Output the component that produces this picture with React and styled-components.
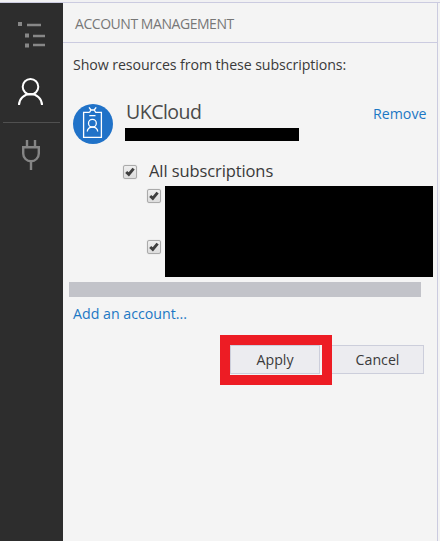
import React from "react";
import styled, { createGlobalStyle } from "styled-components";

const GlobalStyle = createGlobalStyle`
  *, *::before, *::after { box-sizing: border-box; }
  body { margin: 0; background: #f4f4f4; font-family: "Open Sans", "Noto Sans", sans-serif; }
  svg { display: block; flex: none; }
`;

const Window = styled.div`
  display: flex;
  width: 440px;
  height: 541px;
  border-top: 2px solid #f1f1f3;
  box-shadow: inset 0 1px #cbcbe0;
  padding-top: 1px;
  overflow: hidden;
`;

const Sidebar = styled.nav`
  width: 63px;
  flex: none;
  background: #2d2d2d;
  display: flex;
  flex-direction: column;
`;

const SideItem = styled.div`
  height: ${(p) => p.$height}px;
`;

const SideRule = styled.div`
  height: 1px;
  margin: 0 3px;
  background: #505050;
`;

const Panel = styled.main`
  width: 375px;
  flex: none;
  border-right: 1px solid #cbcbe0;
  display: flex;
  flex-direction: column;
`;

const PanelHeader = styled.header`
  height: 40px;
  padding: 3px 12px 0;
  display: flex;
  align-items: center;
  border-bottom: 1px solid #cbcbe0;
`;

const Text = styled.span`
  display: block;
  font-size: ${(p) => p.$size}px;
  line-height: 20px;
  letter-spacing: ${(p) => p.$spacing || 0}px;
  color: ${(p) => p.$color || "#3a3a3a"};
  white-space: nowrap;
`;

const Intro = styled.div`
  padding: 12px 10px 0;
  height: 61px;
`;

const Account = styled.section`
  height: 57px;
  padding-left: 10px;
  display: flex;
  align-items: flex-start;
`;

const AccountDetails = styled.div`
  margin-left: 12px;
  margin-top: -3px;
  width: 248px;
  flex: none;
`;

const AccountName = styled(Text)`
  margin-left: 1px;
  line-height: 22px;
`;

const Redaction = styled.div`
  width: ${(p) => p.$width}px;
  height: ${(p) => p.$height}px;
  background: #000;
`;

const NameRedaction = styled(Redaction)`
  margin-top: 5px;
`;

const AllRow = styled.div`
  height: 25px;
  padding: 0 0 0 60px;
  display: flex;
  gap: 12px;
`;

const Subscriptions = styled.div`
  height: 96px;
  padding-left: 84px;
  display: flex;
  gap: 4px;
`;

const CheckColumn = styled.div`
  display: flex;
  flex-direction: column;
  gap: 37px;
  padding-top: 3px;
`;

const Box = styled.span`
  width: 14px;
  height: 14px;
  flex: none;
  display: grid;
  place-items: center;
  border: 1px solid #aaaaaa;
  border-radius: 2px;
  background: linear-gradient(#eeeeee, #dddddd);
  box-shadow: 0 0 1px #bbbbbb;
`;

const AllBox = styled(Box)`
  margin-top: 4px;
`;

const ScrollThumb = styled.div`
  width: 352px;
  height: 15px;
  margin-left: 6px;
  background: #c2c3c9;
`;

const AddAccount = styled.div`
  height: 38px;
  padding: 7px 10px 0;
`;

const Actions = styled.div`
  display: flex;
  margin-left: 157px;
`;

const Highlight = styled.div`
  width: 112px;
  height: 50px;
  border: 10px solid #ed1c24;
`;

const Button = styled.button`
  width: ${(p) => p.$width}px;
  height: 29px;
  padding: 0;
  display: flex;
  align-items: center;
  justify-content: center;
  border: 1px solid #cccedb;
  border-left-width: ${(p) => (p.$joined ? 0 : 1)}px;
  background: #ececf0;
  font-family: inherit;
`;

const CancelButton = styled(Button)`
  margin-top: 10px;
`;

function Checkbox({ as: Component = Box }) {
  return (
    <Component>
      <svg width="12" height="12" viewBox="0 0 12 12">
        <path d="M2.2 6 L4.8 8.4 L9.6 2.6" fill="none" stroke="#3f3f3f" strokeWidth="2.9" />
      </svg>
    </Component>
  );
}

const TreeIcon = () => (
  <svg width="63" height="64" viewBox="0 3 63 64" fill="#878787">
    <path d="M18 22h4v4h-4zM25 33.5h4v4h-4zM25 43.5h4v4h-4zM27 23.8h14v2.5H27zM33 34.8h12v2.5H33zM33 43.8h12v2.5H33z" />
  </svg>
);

const PersonIcon = () => (
  <svg width="63" height="55" viewBox="0 67 63 55" fill="none" stroke="#fff" strokeWidth="2">
    <circle cx="30.5" cy="86.7" r="7.8" />
    <path d="M19 105a11.5 11 0 0 1 23 0" />
  </svg>
);

const PlugIcon = () => (
  <svg width="63" height="50" viewBox="0 123 63 50" fill="none" stroke="#858585" strokeWidth="2.4">
    <path d="M27 140v7M35 140v7M22 147.2h18M23.2 147v6.5a7.8 7.8 0 0 0 15.6 0V147M31 161.3V170" />
  </svg>
);

const BadgeIcon = () => (
  <svg width="40" height="40" viewBox="0 0 40 40" fill="none" stroke="#fff" strokeWidth="1.3">
    <circle cx="20" cy="20" r="20" fill="#2072c8" stroke="none" />
    <path d="M16.5 8.4H10.6V33.3H28.4V8.4H22.5M16 3.3l2 2.7h3.2l2-2.7M18 6l-1.5 2.4M21.2 6l1.5 2.4M16.3 11.6h6.2" />
    <circle cx="19.4" cy="19.3" r="3.9" />
    <path d="M14.3 27.5a5.2 4.5 0 0 1 10.4 0" />
  </svg>
);

export default function App() {
  return (
    <>
      <GlobalStyle />
      <Window>
        <Sidebar>
          <SideItem $height={64}><TreeIcon /></SideItem>
          <SideItem $height={55}><PersonIcon /></SideItem>
          <SideRule />
          <SideItem $height={50}><PlugIcon /></SideItem>
        </Sidebar>
        <Panel>
          <PanelHeader>
            <Text $size={14} $spacing={-0.45} $color="#777777">ACCOUNT MANAGEMENT</Text>
          </PanelHeader>
          <Intro>
            <Text $size={14.2} $spacing={-0.09}>Show resources from these subscriptions:</Text>
          </Intro>
          <Account>
            <BadgeIcon />
            <AccountDetails>
              <AccountName $size={19.5} $spacing={-0.5} $color="#4a4a4a">UKCloud</AccountName>
              <NameRedaction $width={174} $height={13} />
            </AccountDetails>
            <Text $size={14.2} $color="#1c78c4">Remove</Text>
          </Account>
          <AllRow>
            <Checkbox as={AllBox} />
            <Text $size={16.5} $spacing={-0.1}>All subscriptions</Text>
          </AllRow>
          <Subscriptions>
            <CheckColumn>
              <Checkbox />
              <Checkbox />
            </CheckColumn>
            <Redaction $width={268} $height={91} />
          </Subscriptions>
          <ScrollThumb />
          <AddAccount>
            <Text $size={14.2} $color="#1c78c4">Add an account...</Text>
          </AddAccount>
          <Actions>
            <Highlight>
              <Button $width={90}><Text $size={14.2}>Apply</Text></Button>
            </Highlight>
            <CancelButton $width={92} $joined><Text $size={14.2}>Cancel</Text></CancelButton>
          </Actions>
        </Panel>
      </Window>
    </>
  );
}
